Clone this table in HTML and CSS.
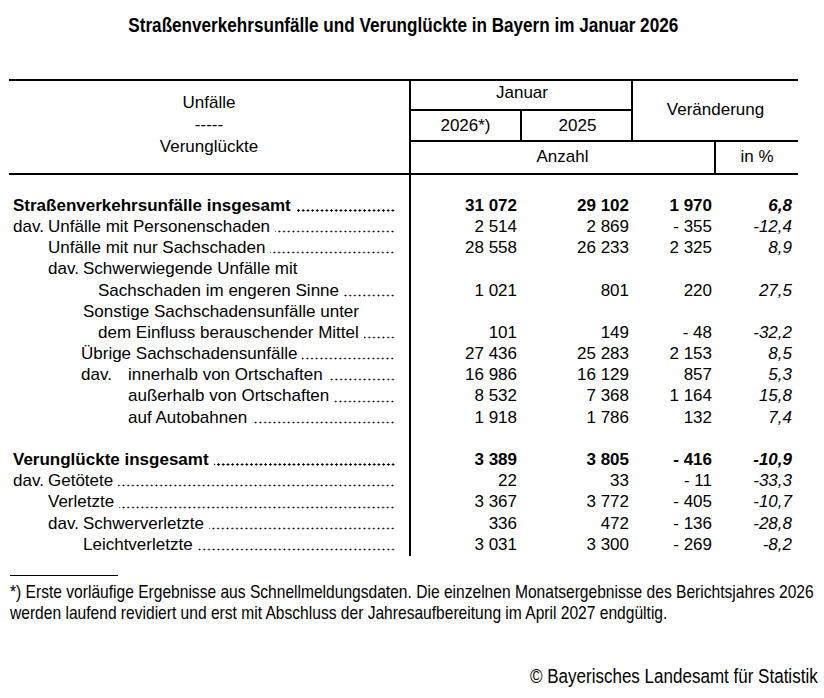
FILE: index.html
```html
<!DOCTYPE html>
<html lang="de">
<head>
<meta charset="utf-8">
<title>Straßenverkehrsunfälle und Verunglückte in Bayern im Januar 2026</title>
<link rel="stylesheet" href="styles.css">
</head>
<body>
<div class="page">
  <h1 class="title"><span class="narrow">Straßenverkehrsunfälle und Verunglückte in Bayern im Januar 2026</span></h1>

  <div class="thead">
    <div class="h-stub"><span>Unfälle</span><span>-----</span><span>Verunglückte</span></div>
    <div class="h-januar">Januar</div>
    <div class="h-veraend">Veränderung</div>
    <div class="h-y1">2026*)</div>
    <div class="h-y2">2025</div>
    <div class="h-anzahl">Anzahl</div>
    <div class="h-pct">in %</div>
  </div>

  <div class="tbody">
    <div class="row lead"><div class="lbl"></div><div class="n"></div><div class="n"></div><div class="n"></div><div class="n"></div></div>

    <div class="row bold"><div class="lbl"><span class="txt">Straßenverkehrsunfälle insgesamt</span><span class="dots"></span></div><div class="n">31 072</div><div class="n">29 102</div><div class="n">1 970</div><div class="n p">6,8</div></div>
    <div class="row"><div class="lbl"><span class="dav">dav.</span><span class="txt">Unfälle mit Personenschaden</span><span class="dots"></span></div><div class="n">2 514</div><div class="n">2 869</div><div class="n">- 355</div><div class="n p">-12,4</div></div>
    <div class="row"><div class="lbl i1"><span class="txt">Unfälle mit nur Sachschaden</span><span class="dots"></span></div><div class="n">28 558</div><div class="n">26 233</div><div class="n">2 325</div><div class="n p">8,9</div></div>
    <div class="row"><div class="lbl i1"><span class="dav">dav.</span><span class="txt">Schwerwiegende Unfälle mit</span></div><div class="n"></div><div class="n"></div><div class="n"></div><div class="n"></div></div>
    <div class="row"><div class="lbl i3"><span class="txt">Sachschaden im engeren Sinne</span><span class="dots"></span></div><div class="n">1 021</div><div class="n">801</div><div class="n">220</div><div class="n p">27,5</div></div>
    <div class="row"><div class="lbl i2"><span class="txt">Sonstige Sachschadensunfälle unter</span></div><div class="n"></div><div class="n"></div><div class="n"></div><div class="n"></div></div>
    <div class="row"><div class="lbl i3"><span class="txt">dem Einfluss berauschender Mittel</span><span class="dots"></span></div><div class="n">101</div><div class="n">149</div><div class="n">- 48</div><div class="n p">-32,2</div></div>
    <div class="row"><div class="lbl i2b"><span class="txt">Übrige Sachschadensunfälle</span><span class="dots"></span></div><div class="n">27 436</div><div class="n">25 283</div><div class="n">2 153</div><div class="n p">8,5</div></div>
    <div class="row"><div class="lbl i2b"><span class="dav wide">dav.</span><span class="txt">innerhalb von Ortschaften</span><span class="dots"></span></div><div class="n">16 986</div><div class="n">16 129</div><div class="n">857</div><div class="n p">5,3</div></div>
    <div class="row"><div class="lbl i4"><span class="txt">außerhalb von Ortschaften</span><span class="dots"></span></div><div class="n">8 532</div><div class="n">7 368</div><div class="n">1 164</div><div class="n p">15,8</div></div>
    <div class="row"><div class="lbl i4"><span class="txt">auf Autobahnen</span><span class="dots"></span></div><div class="n">1 918</div><div class="n">1 786</div><div class="n">132</div><div class="n p">7,4</div></div>

    <div class="row"><div class="lbl"></div><div class="n"></div><div class="n"></div><div class="n"></div><div class="n"></div></div>

    <div class="row bold"><div class="lbl"><span class="txt">Verunglückte insgesamt</span><span class="dots"></span></div><div class="n">3 389</div><div class="n">3 805</div><div class="n">- 416</div><div class="n p">-10,9</div></div>
    <div class="row"><div class="lbl"><span class="dav">dav.</span><span class="txt">Getötete</span><span class="dots"></span></div><div class="n">22</div><div class="n">33</div><div class="n">- 11</div><div class="n p">-33,3</div></div>
    <div class="row"><div class="lbl i1"><span class="txt">Verletzte</span><span class="dots"></span></div><div class="n">3 367</div><div class="n">3 772</div><div class="n">- 405</div><div class="n p">-10,7</div></div>
    <div class="row"><div class="lbl i1"><span class="dav">dav.</span><span class="txt">Schwerverletzte</span><span class="dots"></span></div><div class="n">336</div><div class="n">472</div><div class="n">- 136</div><div class="n p">-28,8</div></div>
    <div class="row last"><div class="lbl i2"><span class="txt">Leichtverletzte</span><span class="dots"></span></div><div class="n">3 031</div><div class="n">3 300</div><div class="n">- 269</div><div class="n p">-8,2</div></div>
  </div>

  <div class="footrule"></div>
  <p class="footnote">*) Erste vorläufige Ergebnisse aus Schnellmeldungsdaten. Die einzelnen Monatsergebnisse des Berichtsjahres 2026<br>werden laufend revidiert und erst mit Abschluss der Jahresaufbereitung im April 2027 endgültig.</p>
  <p class="copy"><span class="narrow-r">© Bayerisches Landesamt für Statistik</span></p>
</div>
</body>
</html>
```
FILE: styles.css
```css
* { box-sizing: border-box; }

html, body {
  margin: 0;
  padding: 0;
  background: #fff;
}

body {
  font-family: "Liberation Sans", Arial, sans-serif;
  font-size: 17px;
  color: #000;
  width: 824px;
  height: 698px;
  overflow: hidden;
}

.page {
  width: 789px;
  margin-left: 9px;
}

/* condensed look (no narrow face installed) */
.narrow,
.narrow-r {
  display: inline-block;
  white-space: nowrap;
  transform: scaleX(0.835);
  transform-origin: center top;
}

.narrow-r { transform-origin: right top; transform: scaleX(0.83); }

.title {
  margin: 0;
  padding-top: 13px;
  height: 79px;
  text-align: center;
  font-weight: bold;
  font-size: 20.5px;
  line-height: 24px;
  white-space: nowrap;
}

/* ---------- header ---------- */
.thead {
  display: grid;
  grid-template-columns: 402px 111px 111px 83px 82px;
  grid-template-rows: 30px 31px 31px;
  border-top: 2px solid #000;
  border-bottom: 2px solid #000;
  line-height: 20px;
}

.thead > div {
  display: flex;
  align-items: center;
  justify-content: center;
}

.h-stub {
  grid-column: 1;
  grid-row: 1 / 4;
  flex-direction: column;
  border-right: 2px solid #000;
  line-height: 22px;
  padding-bottom: 5px;
}

.h-januar {
  grid-column: 2 / 4;
  grid-row: 1;
  border-bottom: 2px solid #000;
  padding-bottom: 4px;
}

.h-veraend {
  grid-column: 4 / 6;
  grid-row: 1 / 3;
  border-left: 2px solid #000;
  border-bottom: 2px solid #000;
  margin-left: -2px;
  padding-bottom: 1px;
}

.h-y1 {
  grid-column: 2;
  grid-row: 2;
  border-right: 2px solid #000;
  border-bottom: 2px solid #000;
}

.h-y2 {
  grid-column: 3;
  grid-row: 2;
  border-bottom: 2px solid #000;
}

.h-anzahl {
  grid-column: 2 / 5;
  grid-row: 3;
  border-right: 2px solid #000;
  margin-bottom: -2px;
  padding-bottom: 4px;
}

.h-pct {
  grid-column: 5;
  grid-row: 3;
  padding-bottom: 2px;
}

/* ---------- body ---------- */
.tbody {
  display: flex;
  flex-direction: column;
}

.row {
  display: grid;
  grid-template-columns: 402px 111px 111px 83px 82px;
  height: 21.2px;
  line-height: 21.2px;
}

.row.lead { height: 19.8px; }
.row.last { height: 22.6px; }

.lbl {
  display: flex;
  border-right: 2px solid #000;
  padding-left: 4px;
  padding-right: 14px;
  white-space: nowrap;
}

.lbl.i1 { padding-left: 39px; }
.lbl.i2 { padding-left: 74px; }
.lbl.i2b { padding-left: 72px; }
.lbl.i3 { padding-left: 89px; }
.lbl.i4 { padding-left: 119px; }

.dav {
  display: inline-block;
  width: 35px;
  flex: none;
}

.dav.wide { width: 47px; }

.txt {
  flex: none;
  padding-right: 5px;
}

/* dotted leader */
.dots {
  flex: 1;
  min-width: 0;
  background-image: radial-gradient(circle, #000 0.8px, transparent 1.1px);
  background-size: 4.72px 3px;
  background-repeat: repeat-x;
  background-position: right 0 top 14.2px;
}

.bold .dots {
  background-image: radial-gradient(circle, #000 0.95px, transparent 1.3px);
  background-size: 4.72px 3px;
}

.n {
  text-align: right;
  white-space: nowrap;
}

.row > .n:nth-child(2) { padding-right: 5px; }
.row > .n:nth-child(3) { padding-right: 4px; }
.row > .n:nth-child(4) { padding-right: 4px; }
.row > .n:nth-child(5) { padding-right: 6px; }

.n.p { font-style: italic; }

.bold { font-weight: bold; }

/* ---------- footer ---------- */
.footrule {
  width: 108px;
  height: 1px;
  background: #000;
  margin-top: 19px;
  margin-left: 1px;
}

.footnote {
  margin: 5px 0 0 1px;
  width: 990px;
  white-space: nowrap;
  font-size: 19px;
  line-height: 21px;
  transform: scaleX(0.82);
  transform-origin: left top;
}

.copy {
  margin: 43px 0 0 0;
  width: 809px;
  text-align: right;
  font-size: 20.5px;
  line-height: 20px;
}
```
